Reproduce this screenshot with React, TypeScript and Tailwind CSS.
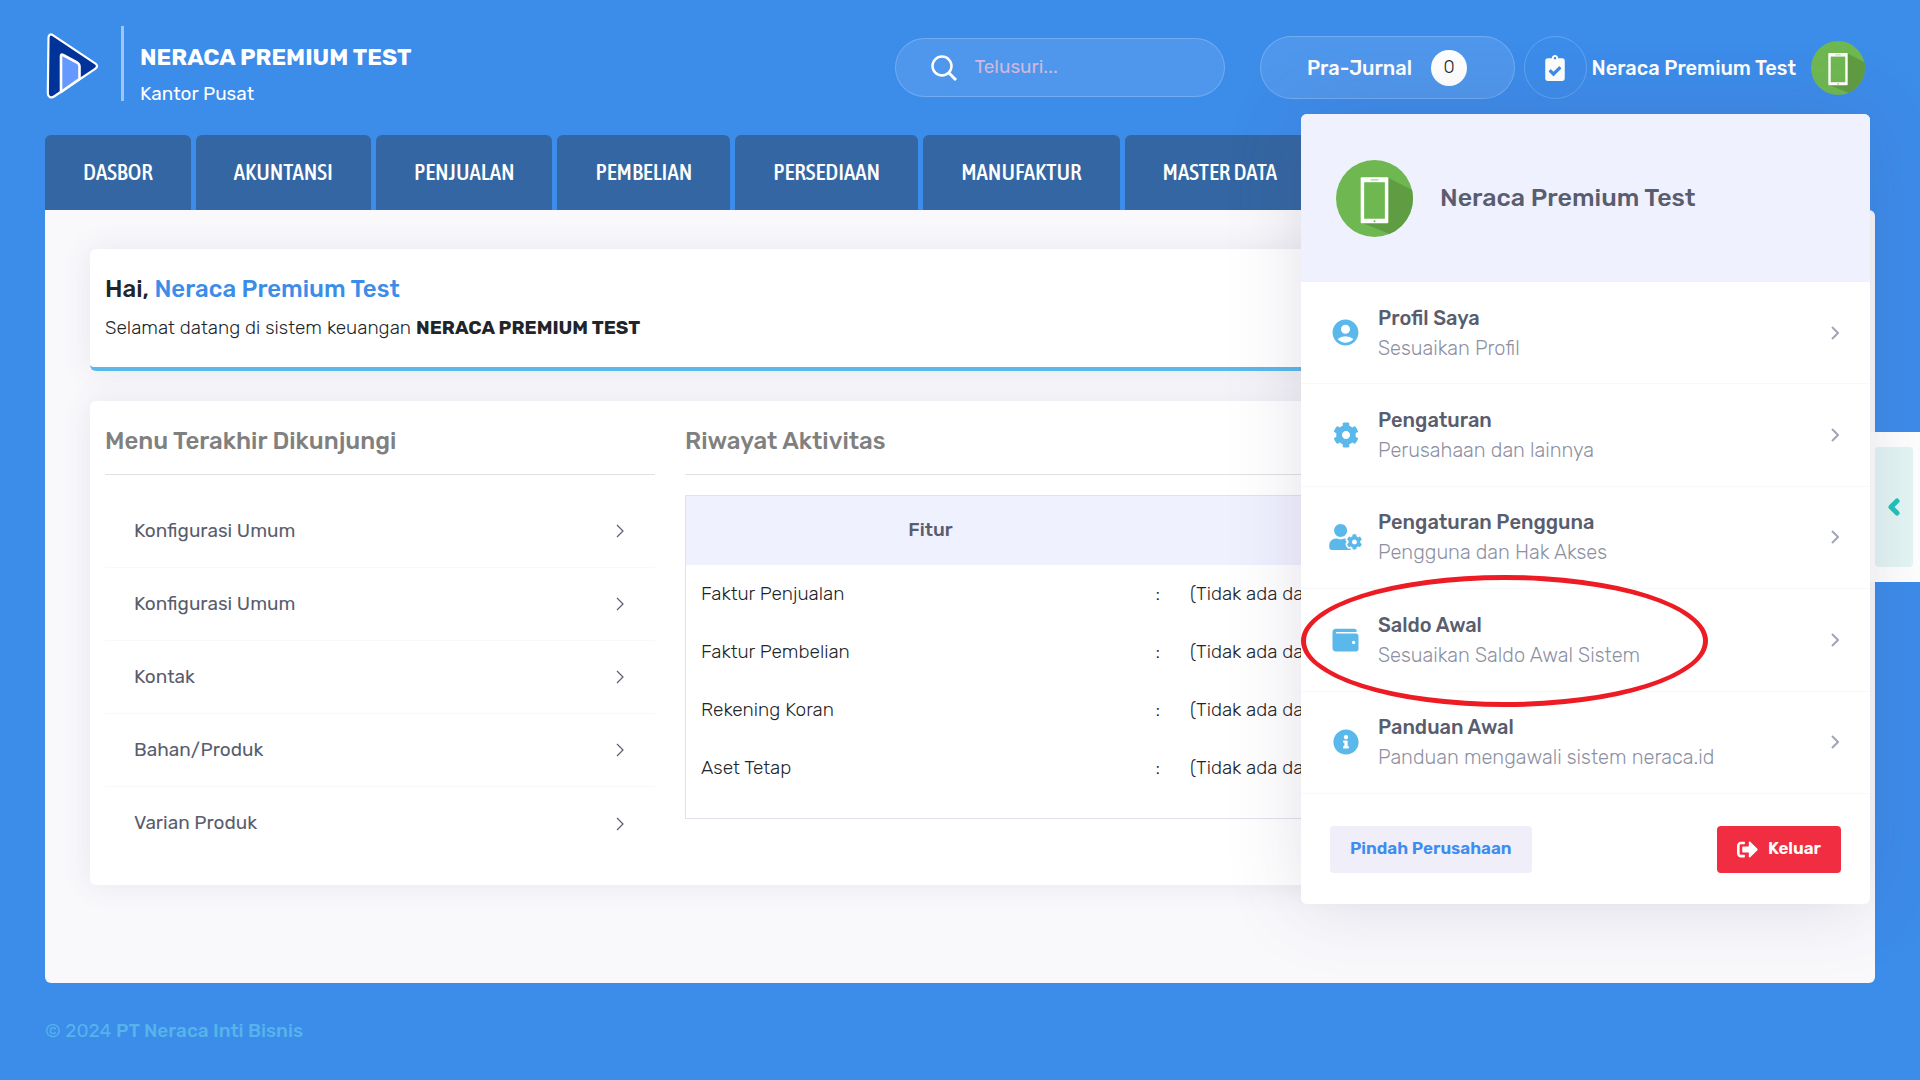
import { ChevronLeft } from "lucide-react";
import { FaClipboardCheck, FaCog, FaInfoCircle, FaSignOutAlt, FaUserCog, FaWallet } from "react-icons/fa";
import { MdAccountCircle } from "react-icons/md";

const tabs = ["DASBOR", "AKUNTANSI", "PENJUALAN", "PEMBELIAN", "PERSEDIAAN", "MANUFAKTUR", "MASTER DATA"];

const recentMenus = ["Konfigurasi Umum", "Konfigurasi Umum", "Kontak", "Bahan/Produk", "Varian Produk"];

const activities = ["Faktur Penjualan", "Faktur Pembelian", "Rekening Koran", "Aset Tetap"];

const userMenus = [
    { title: "Profil Saya", desc: "Sesuaikan Profil", icon: <MdAccountCircle className="h-[31px] w-[31px]" /> },
    { title: "Pengaturan", desc: "Perusahaan dan lainnya", icon: <FaCog className="h-[26px] w-[26px]" /> },
    { title: "Pengaturan Pengguna", desc: "Pengguna dan Hak Akses", icon: <FaUserCog className="h-[26px] w-[33px]" /> },
    { title: "Saldo Awal", desc: "Sesuaikan Saldo Awal Sistem", icon: <FaWallet className="h-[26px] w-[27px]" />, marked: true },
    { title: "Panduan Awal", desc: "Panduan mengawali sistem neraca.id", icon: <FaInfoCircle className="h-[26px] w-[26px]" /> },
];

function Logo() {
    return (
        <svg viewBox="0 0 52 66" className="mt-[7px] h-[66px] w-[52px]" aria-hidden="true">
            <path
                d="M2.500 5C2.500 1.600 4.600.6 6.800 2.200L49.500 30.600c2 1.400 2 3.600 0 5L8 63.500c-3 2-6.200.6-6.200-3.400Z"
                fill="#003399"
                stroke="#fff"
                strokeWidth="2.200"
                strokeLinejoin="round"
            />
            <path
                d="M15 59V23q0-2 2-1L31 29.500q2.500 1.500 2.500 4V46Z"
                fill="#6699ff"
                stroke="#fff"
                strokeWidth="2.600"
                strokeLinejoin="round"
            />
        </svg>
    );
}

function Avatar({ className }: { className: string }) {
    return (
        <svg viewBox="0 0 78 78" className={className} aria-hidden="true">
            <defs>
                <clipPath id="avatar-circle">
                    <circle cx="39" cy="39" r="39" />
                </clipPath>
            </defs>
            <g clipPath="url(#avatar-circle)">
                <rect width="78" height="78" fill="#6fb851" />
                <path d="M53 18 78 31v47H62L25 63Z" fill="#609c42" />
                <rect x="25" y="17.500" width="28" height="46.500" rx="1" fill="#fff" />
                <rect x="28.500" y="22.500" width="21" height="37" fill="#6fb851" />
                <rect x="35" y="19.500" width="8" height="1.200" fill="#a9cf97" />
                <circle cx="39" cy="62" r="1" fill="#6fb851" />
            </g>
        </svg>
    );
}

function Chevron({ className, strokeWidth }: { className: string; strokeWidth: number }) {
    return (
        <svg viewBox="0 0 8 14" className={className} fill="none" stroke="currentColor" strokeWidth={strokeWidth} aria-hidden="true">
            <path d="m1 1 6 6-6 6" />
        </svg>
    );
}

function UserDropdown() {
    return (
        <div className="absolute top-[114px] right-[50px] z-20 w-[569px] rounded-md bg-white shadow-[0_0_75px_0_rgba(82,63,105,0.17)]">
            <div className="flex h-[168px] items-center gap-[27px] rounded-t-md bg-[#f0f1ff] px-[35px]">
                <Avatar className="h-[77px] w-[77px]" />
                <span className="text-[25px] font-medium text-[#595d6e]">Neraca Premium Test</span>
            </div>
            <nav className="grid h-[512px] grid-rows-5">
                {userMenus.map((item) => (
                    <a key={item.title} href="#" className="relative flex items-center border-b border-[#f7f8fa] pr-[31px] pl-[28px]">
                        <span className="flex w-[33px] justify-center text-[#5ab8ea]">{item.icon}</span>
                        <span className="ml-4 flex-1">
                            <span className="block text-[20px] leading-[30px] font-medium text-[#595d6e]">{item.title}</span>
                            <span className="block text-[20px] leading-[30px] font-light text-[#8d90a3]">{item.desc}</span>
                        </span>
                        <Chevron className="h-[14px] w-[8px] text-[#a2a5b9]" strokeWidth={2} />
                        {item.marked && (
                            <span className="absolute top-[-14px] left-0 h-[132px] w-[407px] rounded-[50%] border-[5px] border-[#ed1c24]" />
                        )}
                    </a>
                ))}
            </nav>
            <div className="flex h-[110px] items-center justify-between px-[29px]">
                <button className="h-[47px] rounded bg-[#f0eff9] px-5 text-[17px] font-semibold text-[#3d8cf0]">Pindah Perusahaan</button>
                <button className="flex h-[47px] items-center gap-[10px] rounded bg-[#f02d41] px-5 text-[17px] font-semibold text-white">
                    <FaSignOutAlt className="h-[21px] w-[21px]" />
                    Keluar
                </button>
            </div>
        </div>
    );
}

function Header() {
    return (
        <header className="flex h-[135px] justify-between pr-[55px] pl-[46px] text-white">
            <div className="flex items-start pt-[26px]">
                <Logo />
                <div className="ml-[23px] h-[75px] w-[3px] bg-white/50" />
                <div className="ml-4 pt-[13px]">
                    <h1 className="text-[23px] leading-9 font-bold">NERACA PREMIUM TEST</h1>
                    <p className="text-[19px] leading-[38px]">Kantor Pusat</p>
                </div>
            </div>
            <div className="flex items-center">
                <label className="flex h-[59px] w-[330px] items-center gap-[18px] rounded-full border border-white/20 bg-white/10 px-[35px]">
                    <svg viewBox="0 0 26 26" className="h-[26px] w-[26px] shrink-0" fill="none" stroke="currentColor" strokeWidth="2.500" aria-hidden="true">
                        <circle cx="11" cy="11" r="9.500" />
                        <path d="m18 18 7 7" strokeWidth="3" />
                    </svg>
                    <input
                        type="text"
                        aria-label="Telusuri"
                        placeholder="Telusuri..."
                        className="w-full min-w-0 bg-transparent text-[19px] outline-none placeholder:text-[#d0b9de]"
                    />
                </label>
                <button className="ml-[35px] flex h-[63px] w-[255px] items-center justify-center gap-[19px] rounded-full border border-white/20 bg-white/10 text-[20px] font-medium">
                    Pra-Jurnal
                    <span className="flex h-9 w-9 items-center justify-center rounded-full bg-white text-[18px] font-light text-[#212529]">0</span>
                </button>
                <button
                    aria-label="Persetujuan"
                    className="ml-[9px] flex h-[63px] w-[63px] items-center justify-center rounded-full border border-white/20"
                >
                    <FaClipboardCheck className="h-[26px] w-[20px]" />
                </button>
                <button className="ml-[5px] flex items-center gap-[15px] text-[20px] font-medium">
                    Neraca Premium Test
                    <Avatar className="h-[54px] w-[54px]" />
                </button>
            </div>
        </header>
    );
}

export default function App() {
    return (
        <div className="relative min-h-screen overflow-hidden bg-[#3c8cea] font-[Rubik,Roboto,sans-serif] text-[#212529]">
            <Header />
            <UserDropdown />

            <nav className="mx-[45px] flex gap-[5px]">
                {tabs.map((tab) => (
                    <a
                        key={tab}
                        href="#"
                        className="flex h-[75px] items-center justify-center rounded-t-md bg-[#3366a2] px-[38px] font-['Asap_Condensed','Liberation_Sans_Narrow',Roboto,sans-serif] text-[23px] font-medium whitespace-nowrap text-white"
                    >
                        {tab}
                    </a>
                ))}
            </nav>

            <main className="mx-[45px] min-h-[773px] rounded-b-md rounded-tr-md bg-[#f9f9fc] px-[45px] pt-[39px]">
                <section className="h-[122px] rounded-md border-b-4 border-[#5ab8ea] bg-white px-[15px] pt-[22px] shadow-[0_0_30px_0_rgba(82,63,105,0.1)]">
                    <h2 className="text-[24px] leading-9 font-medium">
                        Hai, <span className="text-[#3c8cea]">Neraca Premium Test</span>
                    </h2>
                    <p className="mt-1 text-[19px] leading-[34px] font-light">
                        Selamat datang di sistem keuangan <b className="font-bold">NERACA PREMIUM TEST</b>
                    </p>
                </section>

                <section className="mt-[30px] grid grid-cols-3 gap-[30px] rounded-md bg-white px-[15px] pt-[22px] pb-[25px] shadow-[0_0_30px_0_rgba(82,63,105,0.1)]">
                    <div>
                        <h3 className="border-b border-[#e1e1e4] pb-[15px] text-[24px] leading-9 font-medium text-[#808080]">Menu Terakhir Dikunjungi</h3>
                        <nav className="mt-[20px]">
                            {recentMenus.map((menu, i) => (
                                <a
                                    key={i}
                                    href="#"
                                    className="flex h-[73px] items-center justify-between border-b border-[#f7f8fa] pr-[31px] pl-[29px] text-[19px] text-[#595d6e] last:border-b-0"
                                >
                                    {menu}
                                    <Chevron className="h-[14px] w-[8px]" strokeWidth={1.2} />
                                </a>
                            ))}
                        </nav>
                    </div>
                    <div className="col-span-2">
                        <h3 className="border-b border-[#e1e1e4] pb-[15px] text-[24px] leading-9 font-medium text-[#808080]">Riwayat Aktivitas</h3>
                        <div className="mt-[20px] border border-[#e1e2e9] pb-[21px]">
                            <table className="w-full table-fixed text-[19px] font-light">
                                <thead>
                                    <tr className="h-[69px] bg-[#f0f1ff] text-[#595d6e]">
                                        <th colSpan={2} className="w-[489px] font-medium">Fitur</th>
                                        <th aria-label="Aktivitas" />
                                    </tr>
                                </thead>
                                <tbody>
                                    {activities.map((activity) => (
                                        <tr key={activity} className="h-[58px]">
                                            <td className="px-[15px]">{activity}</td>
                                            <td className="pr-[15px] text-right">:</td>
                                            <td className="px-[15px]">(Tidak ada data)</td>
                                        </tr>
                                    ))}
                                </tbody>
                            </table>
                        </div>
                    </div>
                </section>
            </main>

            <footer className="px-[45px] pt-[30px] text-[19px] leading-9 text-[#56b4ea]">
                © 2024 <a href="#" className="font-medium">PT Neraca Inti Bisnis</a>
            </footer>

            {/* Side panel toggle */}
            <div className="absolute top-[432px] right-0 z-10 h-[150px] w-[57px] bg-white py-[15px] pr-[7px] pl-3">
                <button aria-label="Buka panel" className="flex h-full w-full items-center justify-center rounded bg-[#e4f6f5] text-[#1fc4b8]">
                    <ChevronLeft className="h-6 w-6" strokeWidth={5} />
                </button>
            </div>
        </div>
    );
}
